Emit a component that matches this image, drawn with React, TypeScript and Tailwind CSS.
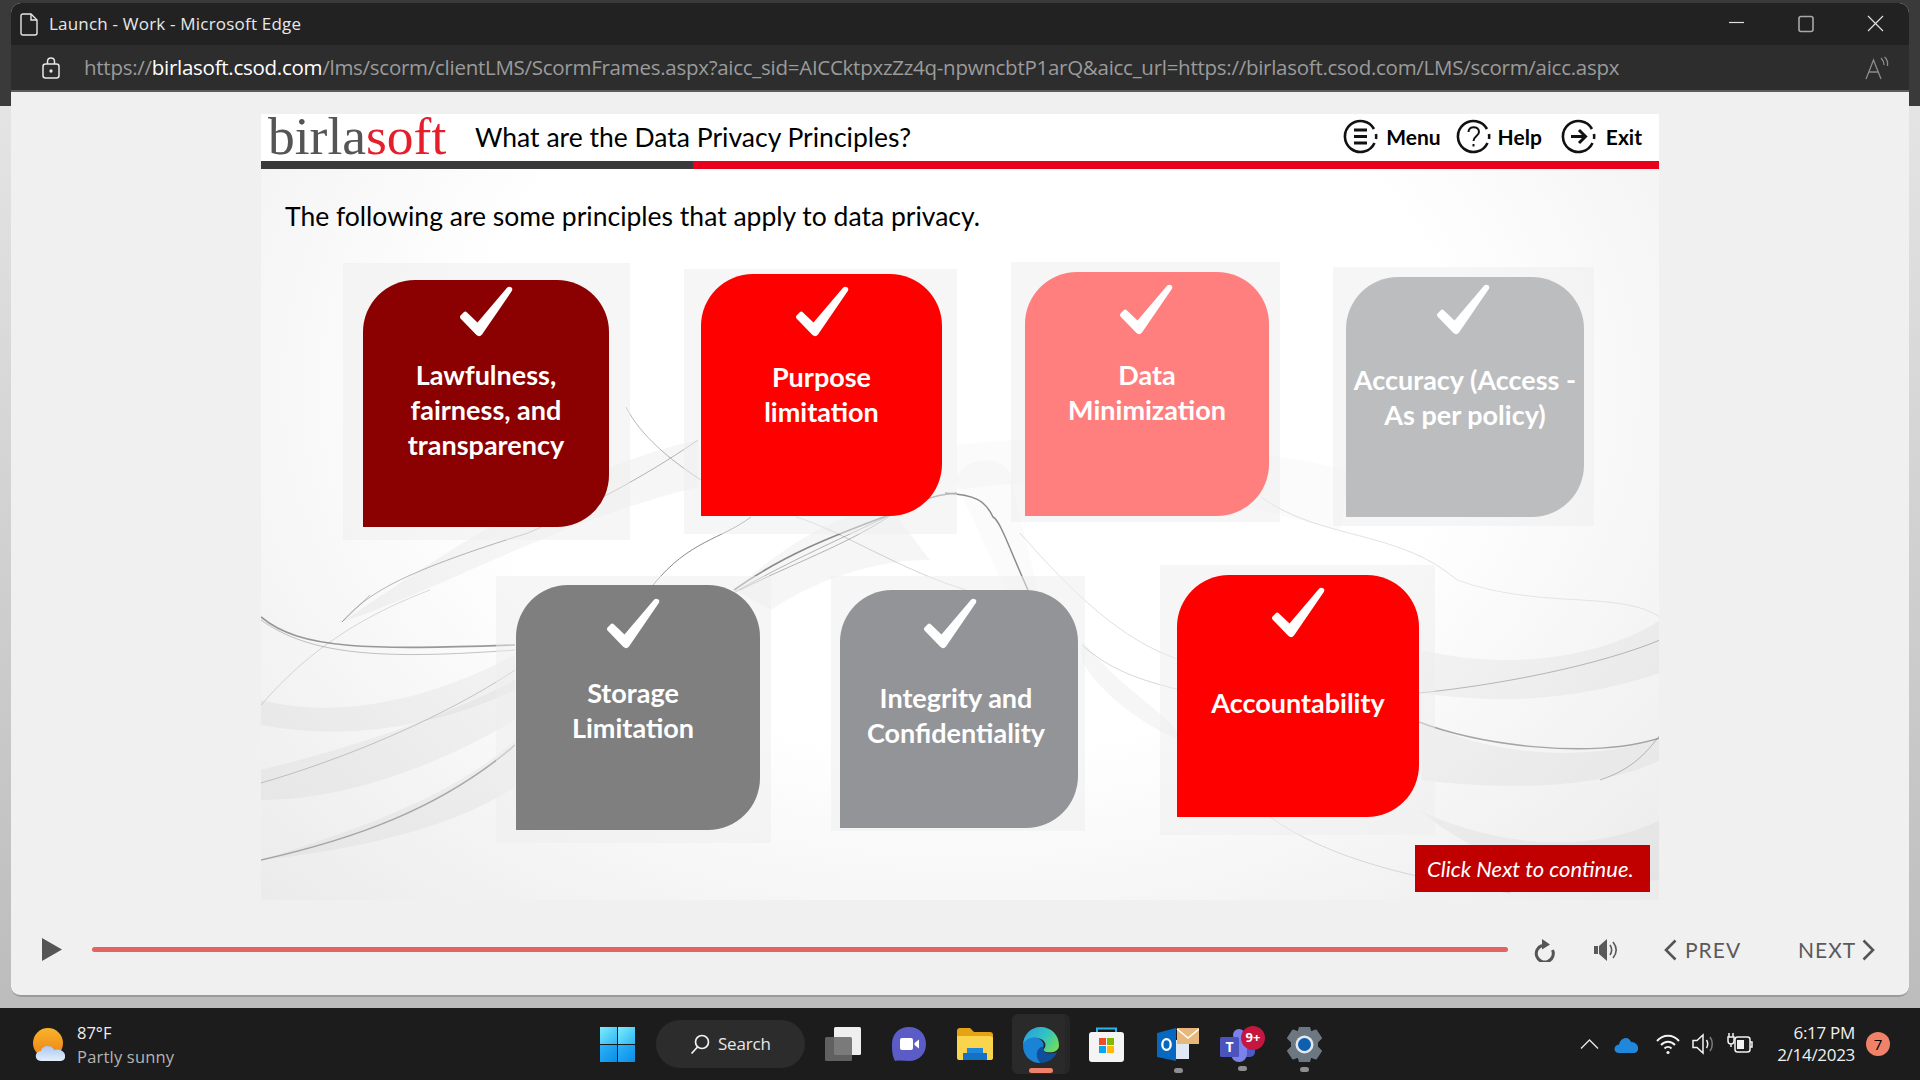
import type { ReactNode } from "react";

const sans = "font-['Open_Sans','Noto_Sans',sans-serif]";
const slideFont = "font-['Lato','Open_Sans',sans-serif]";

interface Principle {
    lines: string[];
    halo: string;
    card: string;
    check: string;
    text: string;
}

const topRow: Principle[] = [
    {
        lines: ["Lawfulness,", "fairness, and", "transparency"],
        halo: "ml-[82px] mt-[1px] w-[287px] h-[277px] pl-[20px] pt-[17px]",
        card: "w-[246px] h-[247px] bg-[#8b0000]",
        check: "mt-[6px]",
        text: "mt-[20px]",
    },
    {
        lines: ["Purpose", "limitation"],
        halo: "ml-[54px] mt-[7px] w-[273px] h-[265px] pl-[17px] pt-[5px]",
        card: "w-[241px] h-[242px] bg-[#ff0000]",
        check: "mt-[12px]",
        text: "mt-[22px]",
    },
    {
        lines: ["Data", "Minimization"],
        halo: "ml-[54px] w-[269px] h-[260px] pl-[14px] pt-[10px]",
        card: "w-[244px] h-[244px] bg-[#ff7f7f]",
        check: "mt-[12px] mr-[3px]",
        text: "mt-[22px]",
    },
    {
        lines: ["Accuracy (Access -", "As per policy)"],
        halo: "ml-[53px] mt-[5px] w-[261px] h-[259px] pl-[13px] pt-[10px]",
        card: "w-[238px] h-[240px] bg-[#bcbdbf]",
        check: "mt-[7px] mr-[4px]",
        text: "mt-[27px]",
    },
];

const bottomRow: Principle[] = [
    {
        lines: ["Storage", "Limitation"],
        halo: "ml-[235px] mt-[36px] w-[275px] h-[267px] pl-[20px] pt-[9px]",
        card: "w-[244px] h-[245px] bg-[#7f7f7f]",
        check: "mt-[13px] mr-[11px]",
        text: "mt-[26px] mr-[10px]",
    },
    {
        lines: ["Integrity and", "Confidentiality"],
        halo: "ml-[60px] mt-[36px] w-[254px] h-[255px] pl-[9px] pt-[14px]",
        card: "w-[238px] h-[238px] bg-[#929497]",
        check: "mt-[8px] mr-[18px]",
        text: "mt-[31px] mr-[6px]",
    },
    {
        lines: ["Accountability"],
        halo: "ml-[75px] mt-[25px] w-[275px] h-[270px] pl-[17px] pt-[10px]",
        card: "w-[242px] h-[242px] bg-[#ff0000]",
        check: "mt-[12px]",
        text: "mt-[47px]",
    },
];

const CheckMark = ({ className }: { className: string }) => (
    <svg viewBox="0 0 54 51" className={`w-[54px] h-[51px] shrink-0 ${className}`}>
        <path
            d="M1.5 29.5 L5 26 Q6.5 25 8 26.5 L18.5 36.5 L48 1.8 Q50 0 52.5 1.5 Q54 3 52.8 5 L23 48.5 Q20.5 51.5 17.5 49 L1.5 32.5 Q0.5 31 1.5 29.5 Z"
            fill="#ffffff"
        />
    </svg>
);

const PrincipleCard = ({ item }: { item: Principle }) => (
    <div className={`shrink-0 bg-[#eeeeee]/50 ${item.halo}`}>
        <div className={`flex flex-col items-center rounded-tl-[52px] rounded-tr-[52px] rounded-br-[52px] ${item.card}`}>
            <CheckMark className={item.check} />
            <div className={`text-center text-white font-bold text-[27px] leading-[35px] whitespace-nowrap ${slideFont} ${item.text}`}>
                {item.lines.map((line) => (
                    <div key={line}>{line}</div>
                ))}
            </div>
        </div>
    </div>
);

const Swirl = () => (
    <svg viewBox="261 169 1398 731" className="absolute inset-0 w-full h-full" fill="none">
        {/* soft ribbons */}
        <g fill="#7a7a7a" fillOpacity="0.07">
            <path d="M261 860 C340 835 450 800 515 740 L515 787 C450 830 350 850 261 860Z" />
            <path d="M261 700 C340 720 430 700 515 655 L515 690 C430 730 340 740 261 725Z" />
            <path d="M342 622 C420 570 560 470 698 440 L698 487 C560 520 440 590 342 622Z" />
            <path d="M1422 650 C1500 670 1600 660 1660 620 L1660 673 C1580 700 1500 705 1422 693Z" />
            <path d="M1422 722 C1500 760 1600 760 1660 738 L1660 760 C1600 790 1500 790 1422 780Z" />
            <path d="M734 590 C790 540 860 500 894 513 L930 560 C860 560 800 590 771 610Z" />
            <path d="M261 770 C340 750 440 720 515 680 L515 720 C430 770 340 800 261 800Z" />
            <path d="M1082 640 C1120 690 1180 720 1180 740 C1130 720 1090 680 1082 660Z" />
            <path d="M1419 810 C1480 840 1580 860 1660 820 L1660 880 C1560 890 1480 860 1419 810Z" />
        </g>
        <g fill="#7a7a7a" fillOpacity="0.03">
            <path d="M957 445 C1080 430 1230 445 1350 470 L1340 530 C1200 495 1090 470 957 490Z" />
            <path d="M1010 473 C1000 455 965 455 955 480 L1010 600 L1040 600Z" />
        </g>
        {/* thin edges */}
        <g stroke="#6f6f6f" strokeWidth="1">
            <path d="M261 617 C300 650 370 650 515 645" strokeWidth="1.7" strokeOpacity="0.7" />
            <path d="M261 620 C310 655 380 660 515 650" strokeOpacity="0.4" />
            <path d="M342 622 C370 590 410 570 528 533 C580 510 640 480 698 440" strokeOpacity="0.5" />
            <path d="M342 622 L370 595" strokeOpacity="0.4" />
            <path d="M653 585 C690 540 720 540 751 517" strokeOpacity="0.8" />
            <path d="M734 590 C790 550 850 530 894 513 C910 505 930 495 957 493" strokeWidth="1.6" strokeOpacity="0.8" />
            <path d="M730 595 C790 560 850 535 900 510" strokeOpacity="0.5" />
            <path d="M740 590 C800 560 860 540 905 505" strokeOpacity="0.5" />
            <path d="M1028 590 C1010 550 1000 520 993 517 C985 500 975 495 945 493" strokeWidth="1.5" strokeOpacity="0.8" />
            <path d="M796 517 C840 530 900 570 966 590" strokeOpacity="0.3" />
            <path d="M626 407 C640 435 670 460 701 480" strokeOpacity="0.5" />
            <path d="M1020 533 C1070 590 1120 640 1180 660" strokeOpacity="0.22" />
            <path d="M1082 645 C1110 670 1140 680 1180 690" strokeOpacity="0.28" />
            <path d="M261 783 C340 760 440 720 515 670" strokeOpacity="0.35" />
            <path d="M261 860 C350 840 440 810 515 745" strokeWidth="1.5" strokeOpacity="0.55" />
            <path d="M261 705 C300 660 350 620 430 590" strokeOpacity="0.25" />
            <path d="M1419 693 C1500 685 1600 665 1660 640" strokeOpacity="0.45" />
            <path d="M1419 722 C1480 745 1590 760 1660 738" strokeWidth="1.5" strokeOpacity="0.6" />
            <path d="M1600 780 C1630 770 1645 755 1660 735" strokeOpacity="0.45" />
            <path d="M1261 497 C1320 540 1400 530 1457 580" strokeOpacity="0.2" />
            <path d="M1270 817 C1330 860 1420 880 1511 893" strokeOpacity="0.22" />
            <path d="M1457 580 C1540 610 1620 590 1660 617" strokeOpacity="0.15" />
        </g>
    </svg>
);

const RingIcon = ({ children }: { children: ReactNode }) => (
    <svg viewBox="0 0 35 35" className="w-[35px] h-[35px] shrink-0" fill="none" stroke="#111111" strokeWidth="2.6">
        <path d="M31 10 A15.5 15.5 0 1 0 31.5 24" />
        <path d="M33 15 A15.5 15.5 0 0 1 33 20" />
        {children}
    </svg>
);

const NavLink = ({ label, icon, className }: { label: string; icon: ReactNode; className: string }) => (
    <div className={`flex items-center ${className}`}>
        {icon}
        <span className={`text-[21px] font-bold text-black ${slideFont}`}>{label}</span>
    </div>
);

const SlideHeader = () => (
    <div className="flex items-center h-[47px] bg-white">
        <div className="ml-[7px] w-[178px] h-[47px] leading-[44px] text-[53.5px] whitespace-nowrap font-['Liberation_Serif',serif] text-[#555555]">
            birla<span className="text-[#e61e2b]">soft</span>
        </div>
        <div className={`ml-[29px] text-[26.5px] text-black ${slideFont}`}>What are the Data Privacy Principles?</div>
        <div className="ml-auto mr-[17px] pb-[2px] flex items-center">
            <NavLink
                label="Menu"
                className="gap-[8px]"
                icon={
                    <RingIcon>
                        <path d="M11 11h13M11 17.5h13M11 24h13" strokeWidth="3" />
                    </RingIcon>
                }
            />
            <NavLink
                label="Help"
                className="ml-[15px] gap-[7px]"
                icon={
                    <RingIcon>
                        <path d="M12.5 13 C12.5 6.5 23 6.5 23 13 C23 17 17.5 17 17.5 22" strokeWidth="2" />
                        <path d="M17.5 25v2.5" strokeWidth="2" />
                    </RingIcon>
                }
            />
            <NavLink
                label="Exit"
                className="ml-[19px] gap-[10px]"
                icon={
                    <RingIcon>
                        <path d="M10 17.5h14M18 11l6.5 6.5L18 24" strokeWidth="3" />
                    </RingIcon>
                }
            />
        </div>
    </div>
);

const Chevron = ({ dir }: { dir: "left" | "right" }) => (
    <svg viewBox="0 0 13 22" className="w-[13px] h-[22px] shrink-0" fill="none" stroke="#555555" strokeWidth="2.6">
        <path d={dir === "left" ? "M11.5 1.5 L2 11 L11.5 20.5" : "M1.5 1.5 L11 11 L1.5 20.5"} />
    </svg>
);

const PlayerControls = () => (
    <div className="flex items-center h-[95px] pt-[4px]">
        <svg viewBox="0 0 20 23" className="ml-[31px] w-[20px] h-[23px] shrink-0">
            <path d="M0 0 L20 11.5 L0 23Z" fill="#555555" />
        </svg>
        <div className="ml-[30px] w-[1416px] h-[5px] rounded-full bg-[#e56262]" />
        <svg viewBox="0 0 21 24" className="ml-[26px] w-[21px] h-[24px] shrink-0" fill="none">
            <path d="M8 7.5 A8.5 8.5 0 1 0 18.5 12" stroke="#555555" strokeWidth="3" />
            <path d="M8 1 L16 6.5 L8 11.5Z" fill="#555555" />
        </svg>
        <svg viewBox="0 0 25 22" className="ml-[39px] w-[25px] h-[22px] shrink-0" fill="none">
            <path d="M0 7h4v8H0Z M5 7 L13 0 V22 L5 15Z" fill="#5a5a5a" />
            <path d="M16 6 C18 9 18 13 16 16 M19 3 C23 8 23 14 19 19" stroke="#5a5a5a" strokeWidth="1.6" />
        </svg>
        <div className="ml-[45px]">
            <Chevron dir="left" />
        </div>
        <span className={`ml-[8px] w-[113px] text-[21px] tracking-[1px] text-[#5a5a5a] ${slideFont}`}>PREV</span>
        <span className={`w-[64px] text-[21px] tracking-[1px] text-[#5a5a5a] ${slideFont}`}>NEXT</span>
        <Chevron dir="right" />
    </div>
);

const WindowChrome = () => (
    <>
        <div className="flex items-center h-[42px] bg-[#222222] rounded-t-[10px]">
            <svg viewBox="0 0 18 23" className="ml-[9px] w-[18px] h-[23px] shrink-0" fill="none" stroke="#e6e6e6" strokeWidth="1.4">
                <path d="M1 3 Q1 1 3 1 H11 L17 7 V20 Q17 22 15 22 H3 Q1 22 1 20Z" />
                <path d="M11 1 V7 H17" />
            </svg>
            <span className={`ml-[11px] text-[17px] text-[#e8e8e8] tracking-[0.2px] ${sans}`}>Launch - Work - Microsoft Edge</span>
            <svg viewBox="0 0 170 20" className="ml-auto mr-[25px] w-[170px] h-[20px]" fill="none" stroke="#e0e0e0" strokeWidth="1.2">
                <path d="M15 8.5h15" />
                <rect x="85" y="2.5" width="14" height="15" rx="2" stroke="#a8a8a8" strokeWidth="1.6" />
                <path d="M154 2 L169 17 M169 2 L154 17" />
            </svg>
        </div>
        <div className="flex items-center h-[47px] bg-[#2d2d2d] border-b-[2px] border-[#5c5c5c]">
            <svg viewBox="0 0 18 22" className="ml-[31px] w-[18px] h-[22px] shrink-0" fill="none" stroke="#e8e8e8" strokeWidth="1.5">
                <rect x="1" y="7" width="16" height="14" rx="2.5" />
                <path d="M5.5 7 V4.5 Q5.5 1 9 1 Q12.5 1 12.5 4.5 V7" />
                <circle cx="9" cy="14" r="0.9" fill="#e8e8e8" />
            </svg>
            <div className={`ml-[24px] text-[20.5px] whitespace-nowrap text-[#9b9b9b] tracking-[-0.27px] ${sans}`}>
                https://<span className="text-white">birlasoft.csod.com</span>/lms/scorm/clientLMS/ScormFrames.aspx?aicc_sid=AICCktpxzZz4q-npwncbtP1arQ&amp;aicc_url=https://birlasoft.csod.com/LMS/scorm/aicc.aspx
            </div>
            <svg viewBox="0 0 24 24" className="ml-auto mr-[20px] w-[24px] h-[24px] shrink-0" fill="none" stroke="#8c8c8c" strokeWidth="1.3">
                <path d="M1 23 L8.5 4 L16 23 M4 16 H13" />
                <path d="M16 2 C18 4 19 6 19 9 M19.5 1 C22 3 23 6 22.5 10" />
            </svg>
        </div>
    </>
);

const WeatherIcon = () => (
    <svg viewBox="0 0 33 33" className="w-[33px] h-[33px] shrink-0">
        <defs>
            <linearGradient id="sun" x1="0" y1="0" x2="0" y2="1">
                <stop offset="0" stopColor="#f9b42a" />
                <stop offset="1" stopColor="#ec7f16" />
            </linearGradient>
            <linearGradient id="cloud" x1="0" y1="0" x2="0" y2="1">
                <stop offset="0" stopColor="#a9c8ef" />
                <stop offset="1" stopColor="#e4eefb" />
            </linearGradient>
        </defs>
        <circle cx="15" cy="15" r="15" fill="url(#sun)" />
        <path d="M8 33 C1 33 1 23 8 23 C9 17 19 16 21 22 C27 20 33 24 32 29 C32 32 29 33 27 33Z" fill="url(#cloud)" />
    </svg>
);

const WindowsLogo = () => (
    <svg viewBox="0 0 35 35" className="w-[35px] h-[35px] shrink-0">
        <defs>
            <linearGradient id="winTop" x1="0" y1="0" x2="1" y2="1">
                <stop offset="0" stopColor="#7cecfc" />
                <stop offset="1" stopColor="#2fb6f5" />
            </linearGradient>
            <linearGradient id="winBottom" x1="0" y1="0" x2="1" y2="1">
                <stop offset="0" stopColor="#2cb4f6" />
                <stop offset="1" stopColor="#0a8de8" />
            </linearGradient>
        </defs>
        <rect x="0" y="0" width="17" height="17" fill="url(#winTop)" />
        <rect x="18" y="0" width="17" height="17" fill="url(#winTop)" />
        <rect x="0" y="18" width="17" height="17" fill="url(#winBottom)" />
        <rect x="18" y="18" width="17" height="17" fill="url(#winBottom)" />
    </svg>
);

const TaskViewIcon = () => (
    <svg viewBox="0 0 36 34" className="w-[36px] h-[34px] shrink-0">
        <rect x="9" y="0" width="27" height="28" rx="1.5" fill="#efefef" />
        <rect x="0" y="10" width="27" height="24" rx="1.5" fill="#6a6a6a" fillOpacity="0.88" />
    </svg>
);

const MeetIcon = () => (
    <svg viewBox="0 0 34 34" className="w-[34px] h-[34px] shrink-0">
        <path d="M17 0 C27 0 34 7 34 17 C34 27 27 34 17 34 C12 34 8 33 3 34 C0 28 0 23 0 17 C0 7 7 0 17 0Z" fill="#5b5cc6" />
        <rect x="8" y="11" width="13" height="12" rx="2" fill="#ffffff" />
        <path d="M22.5 16 L27 12.5 V21.5 L22.5 18Z" fill="#ffffff" />
    </svg>
);

const FolderIcon = () => (
    <svg viewBox="0 0 36 32" className="w-[36px] h-[32px] shrink-0">
        <path d="M0 3 Q0 0 3 0 H13 L17 4 H33 Q36 4 36 7 V30 Q36 32 33 32 H3 Q0 32 0 30Z" fill="#e5a313" />
        <path d="M0 8 H33 Q36 8 36 11 V29 Q36 32 33 32 H3 Q0 32 0 29Z" fill="#fbd44e" />
        <path d="M10 20 H26 V25 H10Z" fill="#1f86d8" />
        <path d="M6 25 H30 V32 H6Z" fill="#1571c4" />
    </svg>
);

const EdgeIcon = () => (
    <svg viewBox="0 0 37 37" className="w-[36px] h-[36px]">
        <defs>
            <linearGradient id="edgeTop" x1="0" y1="0.2" x2="1" y2="0.7">
                <stop offset="0" stopColor="#2a9fe0" />
                <stop offset="0.55" stopColor="#32c3c2" />
                <stop offset="1" stopColor="#6fdc5e" />
            </linearGradient>
        </defs>
        <path d="M18 0 C29 0 37 8 37 19 C37 24 32 26 28 26 C24 26 21 25 21 23 C25 20 24 12 13 11 C7 11 2 14 0 19 C0 8 8 0 18 0Z" fill="url(#edgeTop)" />
        <path d="M0 19 C2 12 9 10 14 11 C20 13 23 18 20 22 C15 24 14 31 18 37 C7 37 0 29 0 19Z" fill="#1a83d6" />
        <path d="M18 37 C12 31 13 21 21 20 C20 25 24 28 29 27 C31 27 33 27 35 26 C32 33 25 37 18 37Z" fill="#0f4f9c" />
    </svg>
);

const StoreIcon = () => (
    <svg viewBox="0 0 35 35" className="w-[35px] h-[35px] shrink-0">
        <path d="M8 7 V1.5 H27 V7" fill="none" stroke="#2fb3ec" strokeWidth="2" />
        <rect x="0" y="5" width="35" height="30" rx="3" fill="#f4f4f4" />
        <rect x="10" y="11" width="7" height="7" fill="#ea4f25" />
        <rect x="18" y="11" width="7" height="7" fill="#80ba03" />
        <rect x="10" y="19" width="7" height="7" fill="#05a5ef" />
        <rect x="18" y="19" width="7" height="7" fill="#ffb902" />
    </svg>
);

const OutlookIcon = () => (
    <svg viewBox="0 0 42 33" className="w-[42px] h-[33px] shrink-0">
        <rect x="14" y="12" width="18" height="19" fill="#dfe9f5" />
        <path d="M0 5 L19 0 V33 L0 29Z" fill="#0668c0" />
        <ellipse cx="9.5" cy="16.5" rx="4.2" ry="5.4" fill="none" stroke="#ffffff" strokeWidth="2.3" />
        <rect x="20" y="0" width="22" height="16" fill="#e7b77b" />
        <path d="M20 1 L31 10 L42 1" fill="none" stroke="#ffffff" strokeWidth="1.5" />
    </svg>
);

const TeamsIcon = () => (
    <div className="relative w-[45px] h-[37px] shrink-0">
        <svg viewBox="0 0 45 37" className="w-[45px] h-[37px]">
            <circle cx="19" cy="9" r="6" fill="#7b83eb" />
            <rect x="22" y="9" width="13" height="22" rx="5" fill="#5059c9" />
            <path d="M11 14 H27 V28 A8 8 0 0 1 11 28Z" fill="#7b83eb" />
            <rect x="0" y="11" width="19" height="20" rx="1.5" fill="#4b53bc" />
        </svg>
        <span className={`absolute left-[3px] top-[13px] text-white text-[14px] font-bold leading-[16px] w-[13px] text-center ${sans}`}>T</span>
        <span className={`absolute right-0 top-0 w-[24px] h-[24px] rounded-full bg-[#c4163f] text-white text-[13px] font-bold leading-[23px] text-center ${sans}`}>9+</span>
    </div>
);

const SettingsIcon = () => (
    <svg viewBox="0 0 37 35" className="w-[37px] h-[35px] shrink-0">
        <path
            d="M14 0 H23 L24.5 5.5 L30 3.5 L35 11 L31 15 V20 L35 24 L30 31.5 L24.5 29.5 L23 35 H14 L12.5 29.5 L7 31.5 L2 24 L6 20 V15 L2 11 L7 3.5 L12.5 5.5Z"
            fill="#6d7782"
            stroke="#6d7782"
            strokeLinejoin="round"
            strokeWidth="2"
        />
        <circle cx="18.5" cy="17.5" r="9" fill="#e4e8ec" />
        <circle cx="18.5" cy="17.5" r="6.5" fill="#0f5fb0" />
    </svg>
);

const Dot = () => <div className="w-[9px] h-[5px] rounded-full bg-[#8e8e8e]" />;

const PinnedApp = ({ className, children, running }: { className: string; children: ReactNode; running?: boolean }) => (
    <div className={`relative shrink-0 ${className}`}>
        {children}
        {running && (
            <div className="absolute top-[40px] left-0 right-0 flex justify-center">
                <Dot />
            </div>
        )}
    </div>
);

const TrayIcons = () => (
    <>
        <svg viewBox="0 0 19 10" className="ml-[60px] w-[19px] h-[10px] shrink-0" fill="none" stroke="#e8e8e8" strokeWidth="1.3">
            <path d="M1 9.5 L9.5 1 L18 9.5" />
        </svg>
        <svg viewBox="0 0 24 17" className="ml-[15px] w-[24px] h-[17px] shrink-0">
            <path d="M5 17 C-1 17 -1 9 5 8.5 C7 1 15 0 17 6 C22 6 25 10 24 14 C23 16 22 17 20 17Z" fill="#1f87dc" />
        </svg>
        <svg viewBox="0 0 24 22" className="ml-[18px] w-[24px] h-[22px] shrink-0" fill="none" stroke="#f2f2f2" strokeWidth="2">
            <path d="M1 8 C7 1 17 1 23 8 M5 12 C9 7.5 15 7.5 19 12 M8.5 15.5 C10.5 13.5 13.5 13.5 15.5 15.5" />
            <circle cx="12" cy="19.5" r="1.6" fill="#f2f2f2" stroke="none" />
        </svg>
        <svg viewBox="0 0 24 24" className="ml-[12px] w-[24px] h-[24px] shrink-0" fill="none" stroke="#f2f2f2" strokeWidth="1.5">
            <path d="M1 8.5 H5 L11 3 V21 L5 15.5 H1Z" />
            <path d="M14.5 8 C16 10.5 16 13.5 14.5 16" />
            <path d="M18 5 C21 9 21 15 18 19" stroke="#7d7d7d" />
        </svg>
        <svg viewBox="0 0 26 24" className="ml-[11px] w-[26px] h-[24px] shrink-0" fill="none" stroke="#f2f2f2" strokeWidth="1.5">
            <rect x="8" y="5" width="15" height="15" rx="2.5" />
            <rect x="10" y="8" width="7" height="9" fill="#f2f2f2" stroke="none" />
            <path d="M23 10 H25 V15 H23" />
            <path d="M2 1 V5 M6 1 V5 M1 5 H7 V9 Q7 12 4 12 Q1 12 1 9Z M4 12 V15" />
        </svg>
    </>
);

const Taskbar = () => (
    <div className={`flex items-center h-[72px] mt-[11px] bg-[#1c1c1c] shrink-0 ${sans}`}>
        <div className="ml-[33px] flex items-center">
            <WeatherIcon />
            <div className="ml-[11px] w-[100px] pt-[1px]">
                <div className="text-[16.5px] leading-[24px] text-[#ededed]">87°F</div>
                <div className="text-[16.5px] leading-[24px] text-[#b4b4b4] whitespace-nowrap tracking-[0.2px]">Partly sunny</div>
            </div>
        </div>
        <div className="ml-[423px]">
            <WindowsLogo />
        </div>
        <div className="ml-[21px] flex items-center w-[149px] h-[48px] rounded-full bg-[#2c2c2c] shrink-0">
            <svg viewBox="0 0 20 20" className="ml-[34px] w-[20px] h-[20px] shrink-0" fill="none" stroke="#f2f2f2" strokeWidth="1.7">
                <circle cx="12" cy="8" r="6.5" />
                <path d="M7.5 13 L1.5 19.5" />
            </svg>
            <span className="ml-[8px] text-[17px] text-[#e8e8e8] tracking-[-0.2px]">Search</span>
        </div>
        <PinnedApp className="ml-[20px]">
            <TaskViewIcon />
        </PinnedApp>
        <PinnedApp className="ml-[31px]">
            <MeetIcon />
        </PinnedApp>
        <PinnedApp className="ml-[31px]">
            <FolderIcon />
        </PinnedApp>
        <div className="relative ml-[19px] w-[58px] h-[60px] rounded-[6px] bg-[#2a2a2a] border-r-[5px] border-[#262626] shrink-0">
            <div className="mt-[13px] ml-[11px]">
                <EdgeIcon />
            </div>
            <div className="absolute top-[54px] left-[17px] w-[24px] h-[5px] rounded-full bg-[#f0806a]" />
        </div>
        <PinnedApp className="ml-[19px]">
            <StoreIcon />
        </PinnedApp>
        <PinnedApp className="ml-[33px]" running>
            <OutlookIcon />
        </PinnedApp>
        <PinnedApp className="ml-[21px]" running>
            <TeamsIcon />
        </PinnedApp>
        <PinnedApp className="ml-[21px]" running>
            <SettingsIcon />
        </PinnedApp>
        <div className="flex items-center ml-[197px]">
            <TrayIcons />
        </div>
        <div className="ml-[21px] w-[81px] text-right text-[17px] leading-[22px] text-[#f0f0f0] tracking-[-0.3px] whitespace-nowrap shrink-0">
            <div>6:17 PM</div>
            <div>2/14/2023</div>
        </div>
        <div className="ml-[11px] flex items-center justify-center w-[24px] h-[24px] rounded-full bg-[#f0826a] text-[15px] text-black shrink-0">7</div>
    </div>
);

export default function App() {
    return (
        <div className="relative flex flex-col w-[1920px] h-[1080px] overflow-hidden bg-gradient-to-b from-[#e9e9e9] to-[#b9b9b9]">
            <div className="absolute top-0 left-0 right-0 h-[106px] bg-[#3a3a3a]" />
            <div className="relative flex flex-col mx-[11px] mt-[3px] h-[994px] rounded-[10px] bg-[#f0f0f0] border-b-[2px] border-[#9a9a9a]">
                <WindowChrome />
                <div className="ml-[250px] mt-[22px] w-[1398px]">
                    <SlideHeader />
                    <div className="flex h-[8px]">
                        <div className="w-[432px] bg-[#3a3a3a]" />
                        <div className="flex-1 bg-[#e8001c]" />
                    </div>
                    <div className="relative h-[731px] overflow-hidden bg-[radial-gradient(ellipse_at_50%_30%,#ffffff_50%,#ebebeb_100%)]">
                        <Swirl />
                        <div className="relative">
                            <p className={`pt-[29px] pl-[24px] text-[26.5px] leading-[36px] text-black ${slideFont}`}>
                                The following are some principles that apply to data privacy.
                            </p>
                            <div className="flex items-start mt-[28px] h-[278px]">
                                {topRow.map((item) => (
                                    <PrincipleCard key={item.lines[0]} item={item} />
                                ))}
                            </div>
                            <div className="flex items-start h-[303px]">
                                {bottomRow.map((item) => (
                                    <PrincipleCard key={item.lines[0]} item={item} />
                                ))}
                            </div>
                            <div className="flex justify-end mt-[2px] pr-[9px]">
                                <div className={`flex items-center w-[235px] h-[47px] pl-[12px] bg-[#c00000] text-white italic text-[22px] whitespace-nowrap ${slideFont}`}>
                                    Click Next to continue.
                                </div>
                            </div>
                        </div>
                    </div>
                </div>
                <PlayerControls />
            </div>
            <Taskbar />
        </div>
    );
}
